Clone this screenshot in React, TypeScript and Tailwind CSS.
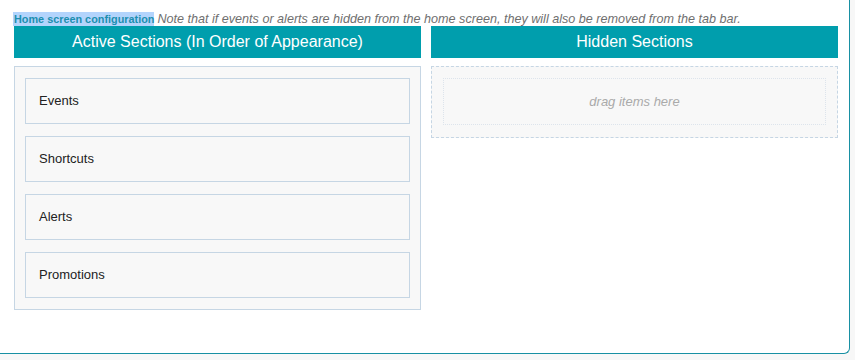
import React from 'react';

const activeSections = ['Events', 'Shortcuts', 'Alerts', 'Promotions'];

const App: React.FC = () => {
    return (
        <div className="w-[855px] h-[360px] bg-[#f7f7f7] font-['Liberation_Sans',Arial,sans-serif]">
            <div className="w-[850px] h-[354px] bg-white border-r border-b border-[#1890a3] rounded-br-[6px] pl-[14px] pr-[11px] pt-[11px]">
                {/* description line */}
                <div className="h-[15px] flex items-end leading-[14px] whitespace-nowrap">
                    <span className="bg-[#b3d4fc] text-[#1c8fb0] text-[10.85px] font-bold -ml-px pl-px">Home screen configuration</span>
                    <span className="text-[#6f6f6f] text-[12.6px] italic ml-[3px]">
                        Note that if events or alerts are hidden from the home screen, they will also be removed from the tab bar.
                    </span>
                </div>

                <div className="grid grid-cols-2 gap-[10px]">
                    {/* active column */}
                    <div>
                        <div className="h-[32px] bg-[#009ead] text-white text-[16px] flex items-center justify-center">
                            Active Sections (In Order of Appearance)
                        </div>
                        <div className="mt-[8px] border border-[#c6d6e4] bg-[#f8f8f8] px-[10px] pt-[11px] pb-[11px] flex flex-col gap-[12px]">
                            {activeSections.map(name => (
                                <div key={name} className="h-[46px] border border-[#c6d6e4] bg-[#f8f8f8] flex items-center pl-[13px] text-[13px] text-[#222]">
                                    {name}
                                </div>
                            ))}
                        </div>
                    </div>

                    {/* hidden column */}
                    <div>
                        <div className="h-[32px] bg-[#009ead] text-white text-[16px] flex items-center justify-center">
                            Hidden Sections
                        </div>
                        <div className="mt-[8px] border border-dashed border-[#c6d6e4] bg-[#f8f8f8] px-[11px] pt-[11px] pb-[12px]">
                            <div className="h-[47px] border border-dotted border-[#dde4ec] flex items-center justify-center text-[13px] italic text-[#aaaaaa]">
                                drag items here
                            </div>
                        </div>
                    </div>
                </div>
            </div>
        </div>
    );
};

export default App;
